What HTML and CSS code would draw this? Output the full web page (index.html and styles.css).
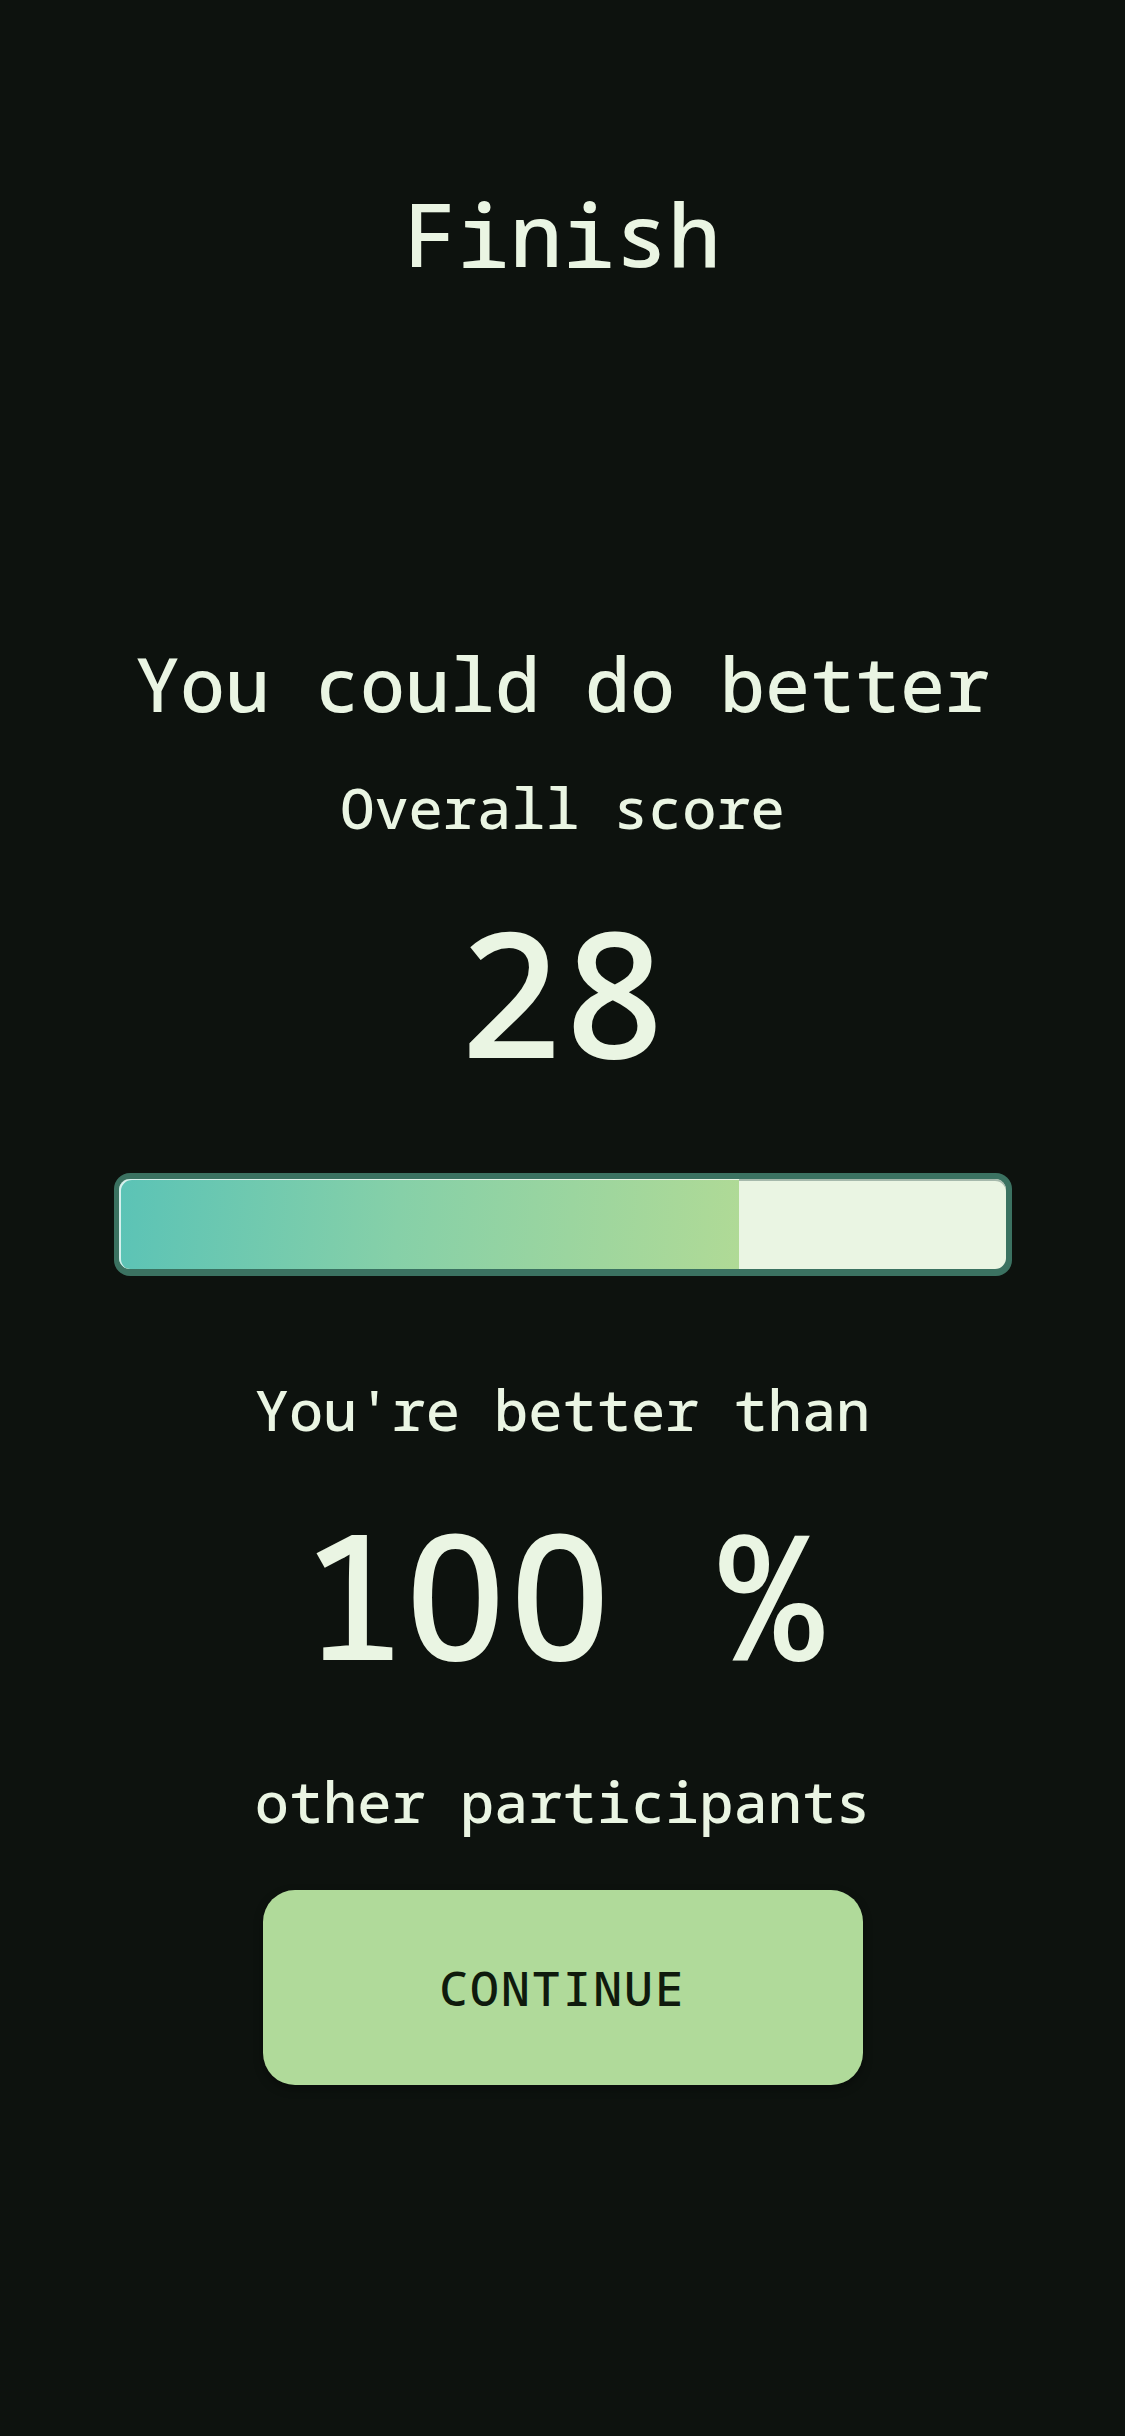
FILE: index.html
```html
<!DOCTYPE html>
<html lang="en">
<head>
<meta charset="utf-8">
<title>Finish</title>
<link rel="stylesheet" href="styles.css">
</head>
<body>
<main class="screen">
  <h1 class="title">Finish</h1>
  <h2 class="verdict">You could do better</h2>
  <p class="label label-score">Overall score</p>
  <p class="big big-score">28</p>
  <div class="bar">
    <div class="bar-inner">
      <div class="bar-fill" style="width: 70%"></div>
    </div>
  </div>
  <p class="label label-better">You're better than</p>
  <p class="big big-pct">1<span class="zero">00</span> %</p>
  <p class="label label-others">other participants</p>
  <button class="btn" type="button">CONTINUE</button>
</main>
</body>
</html>
```

FILE: styles.css
```css
* { box-sizing: border-box; }
html, body {
  margin: 0;
  padding: 0;
  background: #0d120e;
}
body {
  font-family: "Noto Sans Mono", "DejaVu Sans Mono", monospace;
  font-weight: 500;
  color: #eaf5e3;
}
.screen {
  width: 1125px;
  min-height: 2436px;
  display: flex;
  flex-direction: column;
  align-items: center;
  padding-top: 188px;
}
.title {
  margin: 0;
  font-size: 88px;
  line-height: 90px;
  font-weight: 500;
}
.verdict {
  margin: 367px 0 0;
  font-size: 75px;
  line-height: 76px;
  font-weight: 500;
}
.label {
  margin: 0;
  font-size: 57px;
  line-height: 57px;
}
.label-score { margin-top: 58px; }
.big {
  margin: 0;
  font-size: 174px;
  line-height: 175px;
}
.zero {
  font-family: "Noto Sans", "Open Sans", sans-serif;
  letter-spacing: 5px;
}
.big-score { margin-top: 67px; }
.bar {
  margin-top: 95px;
  width: 898px;
  height: 103px;
  border-radius: 16px;
  background: #3b7261;
  padding: 6px 6px 7px 5px;
}
.bar-inner {
  width: 100%;
  height: 100%;
  border-radius: 11px;
  background: #eaf5e3;
  overflow: hidden;
  box-shadow: inset 0 2px 0 #a6b9ac;
}
.bar-fill {
  height: 100%;
  background: linear-gradient(95deg, #5bc3b6 0%, #86d0a8 45%, #b0da96 100%);
  box-shadow: inset 2px 1px 0 rgba(255, 255, 255, 0.75);
  border-radius: 11px 0 0 11px;
}
.label-better { margin-top: 105px; }
.big-pct { margin-top: 67px; }
.label-others { margin-top: 93px; }
.btn {
  margin-top: 60px;
  width: 600px;
  height: 195px;
  border: 0;
  border-radius: 32px;
  background: #b0da9a;
  color: #0f1a0d;
  font-family: "Noto Sans Mono", "DejaVu Sans Mono", monospace;
  font-weight: 500;
  font-size: 48px;
  letter-spacing: 2px;
  box-shadow: 0 4px 10px rgba(0, 0, 0, 0.35);
}
```
